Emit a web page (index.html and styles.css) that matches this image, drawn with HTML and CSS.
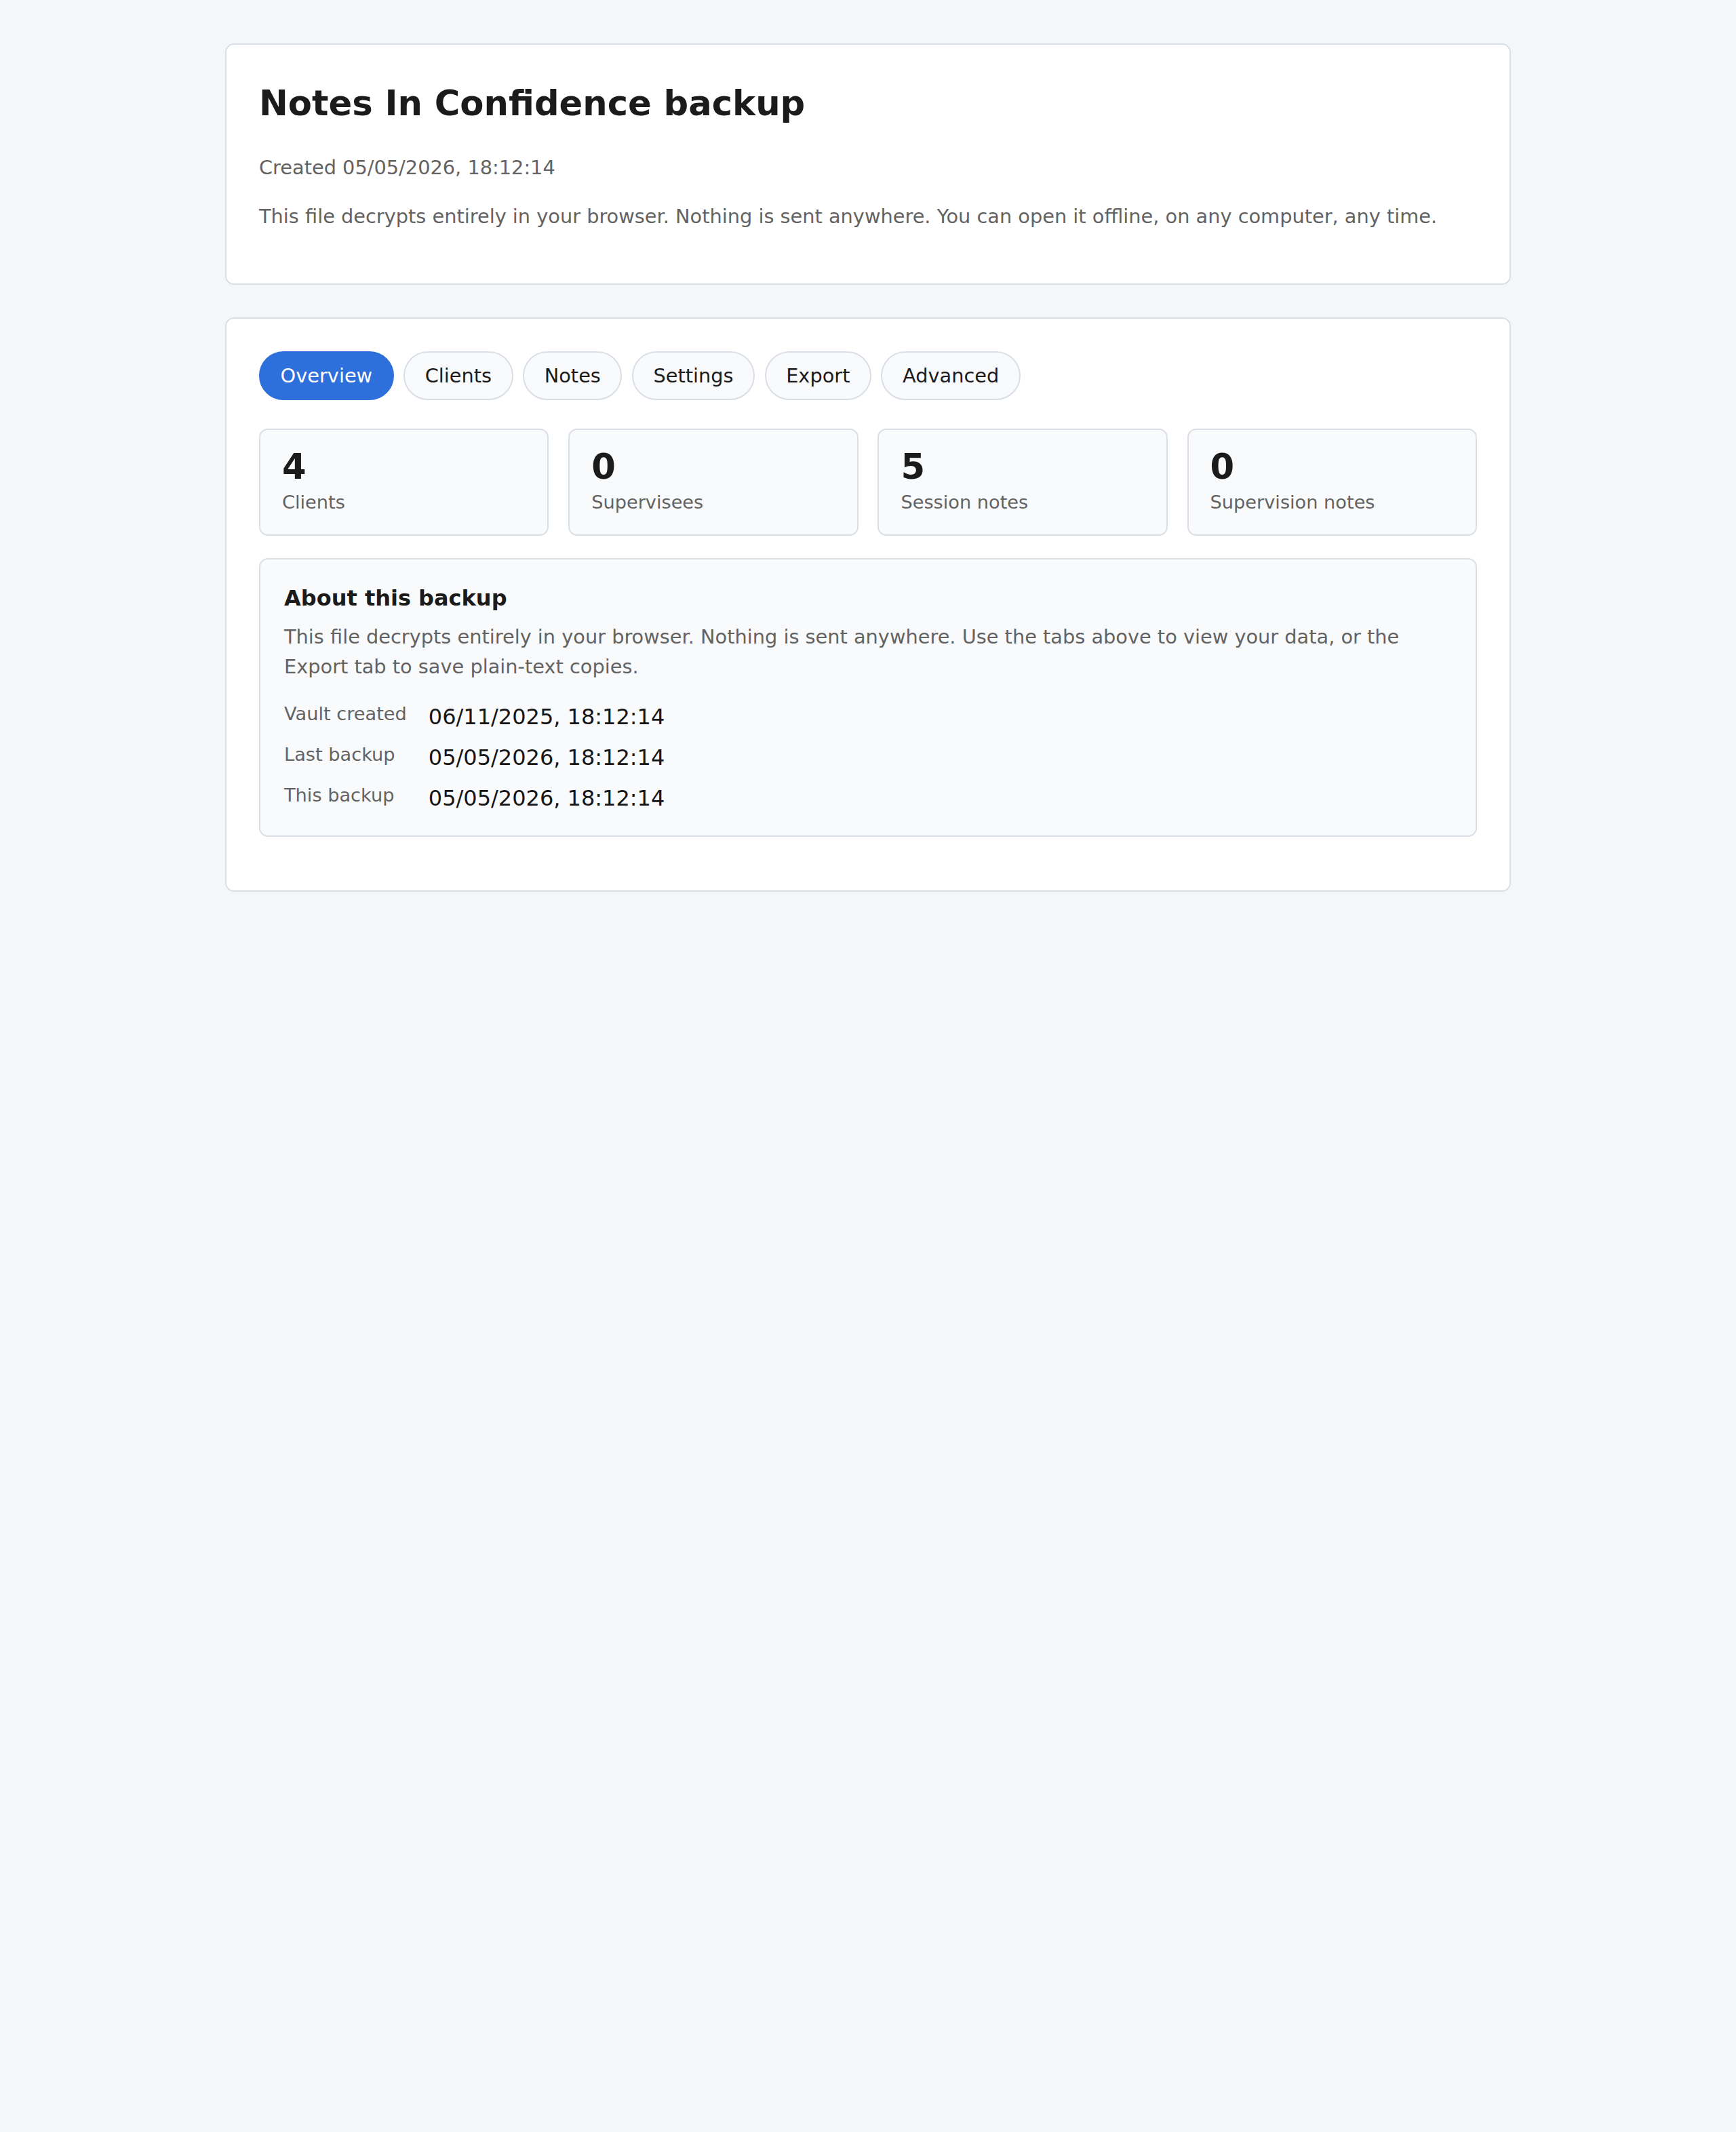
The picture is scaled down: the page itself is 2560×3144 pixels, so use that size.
FILE: index.html
```html
<!DOCTYPE html>
<html lang="en">
<head>
    <meta charset="UTF-8">
    <title>Notes In Confidence backup</title>
    <link rel="stylesheet" href="styles.css">
</head>
<body>

<div class="page">
    <header class="panel intro">
        <h1>Notes In Confidence backup</h1>
        <p class="muted">Created 05/05/2026, 18:12:14</p>
        <p class="muted">This file decrypts entirely in your browser. Nothing is sent anywhere. You can open it offline, on any computer, any time.</p>
    </header>

    <main class="panel">
        <nav class="tabs">
            <button class="tab active">Overview</button>
            <button class="tab">Clients</button>
            <button class="tab">Notes</button>
            <button class="tab">Settings</button>
            <button class="tab">Export</button>
            <button class="tab">Advanced</button>
        </nav>

        <div class="stats">
            <div class="stat">
                <div class="stat-num">4</div>
                <div class="stat-label">Clients</div>
            </div>
            <div class="stat">
                <div class="stat-num">0</div>
                <div class="stat-label">Supervisees</div>
            </div>
            <div class="stat">
                <div class="stat-num">5</div>
                <div class="stat-label">Session notes</div>
            </div>
            <div class="stat">
                <div class="stat-num">0</div>
                <div class="stat-label">Supervision notes</div>
            </div>
        </div>

        <section class="about">
            <h3>About this backup</h3>
            <p class="muted">This file decrypts entirely in your browser. Nothing is sent anywhere. Use the tabs above to view your data, or the Export tab to save plain-text copies.</p>
            <dl class="meta">
                <dt>Vault created</dt>
                <dd>06/11/2025, 18:12:14</dd>
                <dt>Last backup</dt>
                <dd>05/05/2026, 18:12:14</dd>
                <dt>This backup</dt>
                <dd>05/05/2026, 18:12:14</dd>
            </dl>
        </section>
    </main>
</div>

</body>
</html>
```

FILE: styles.css
```css
body {
    margin: 0;
    background: #f5f6f8;
    color: #1b1b1b;
    font-family: "DejaVu Sans", sans-serif;
    font-size: 28.8px;
    line-height: 1.5;
}

.page {
    max-width: 1896px;
    margin: 0 auto;
    padding: 64px 0;
}

.panel {
    background: #ffffff;
    border: 2px solid #dadfe6;
    border-radius: 13px;
    padding: 48px;
    margin-bottom: 48px;
}

.intro h1 {
    font-size: 51.2px;
    margin: 0 0 35px;
}

.intro p {
    margin: 0 0 29px;
}

.muted {
    color: #636363;
}

/* tab pills */
.tabs {
    display: flex;
    gap: 14.4px;
    margin-bottom: 42px;
}

.tab {
    font-family: inherit;
    font-size: 28.8px;
    line-height: 34px;
    padding: 17px 29.6px;
    border: 2px solid #dadfe6;
    border-radius: 999px;
    background: #f9fafc;
    color: #1b1b1b;
    cursor: pointer;
}

.tab.active {
    background: #2d6fdb;
    border-color: #2d6fdb;
    color: #ffffff;
}

/* counters */
.stats {
    display: grid;
    grid-template-columns: repeat(4, 1fr);
    gap: 28.8px;
    margin-bottom: 33px;
}

.stat {
    background: #f9fafc;
    border: 2px solid #dadfe6;
    border-radius: 13px;
    padding: 25.6px 32px 26px;
}

.stat-num {
    font-size: 51.2px;
    font-weight: bold;
    line-height: 1.1;
}

.stat-label {
    font-size: 27.2px;
    color: #636363;
    margin-top: 4.8px;
}

/* about box */
.about {
    background: #f9fafc;
    border: 2px solid #dadfe6;
    border-radius: 13px;
    padding: 33px 35px 31px;
    margin-bottom: 31px;
}

.about h3 {
    font-size: 32px;
    margin: 0 0 12.8px;
}

.about p {
    margin: 0 0 28.5px;
}

.meta {
    display: grid;
    grid-template-columns: max-content 1fr;
    column-gap: 32px;
    row-gap: 11.6px;
    margin: 0;
}

.meta dt {
    font-size: 27.2px;
    color: #636363;
}

.meta dd {
    margin: 0;
    font-size: 32px;
    color: #161616;
}
```
